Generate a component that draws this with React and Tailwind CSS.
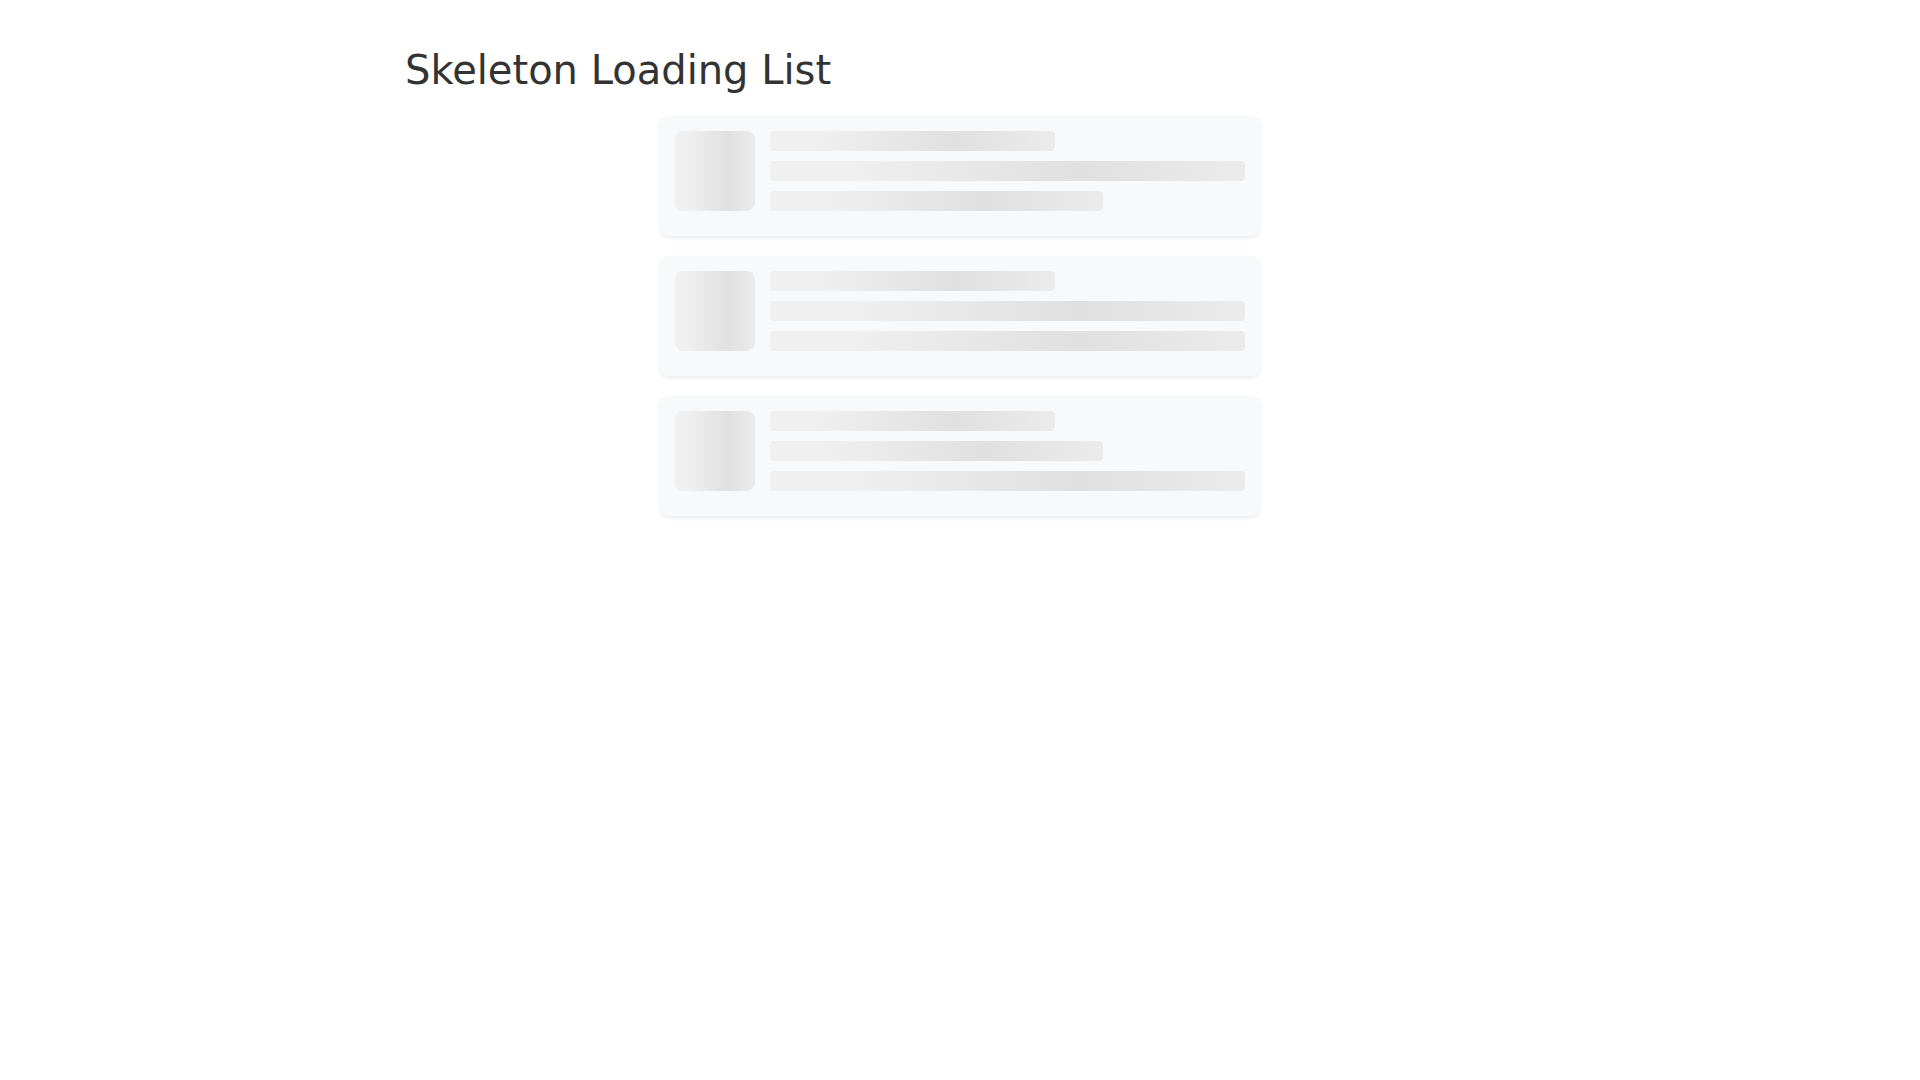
import React from "react";

// Widths of the three text bars in each placeholder row
const rows = [
    ["w-[60%]", "w-full", "w-[70%]"],
    ["w-[60%]", "w-full", "w-full"],
    ["w-[60%]", "w-[70%]", "w-full"],
];

/* Shared shimmer fill, frozen part-way through the sweep */
const shimmer =
    "bg-[linear-gradient(90deg,#f0f0f0_25%,#e0e0e0_50%,#f0f0f0_75%)] bg-size-[200%_100%] bg-position-[35%_0]";

function SkeletonCard({ lines }) {
    return (
        <div className="flex gap-[15px] p-[15px] bg-[#f8f9fa] rounded-lg shadow-[0_2px_4px_rgba(0,0,0,0.08)]">
            <div className={`w-20 h-20 shrink-0 rounded-lg ${shimmer}`} />
            <div className="flex-1">
                {lines.map((w, i) => (
                    <div key={i} className={`h-5 mb-[10px] rounded ${w} ${shimmer}`} />
                ))}
            </div>
        </div>
    );
}

export default function App() {
    return (
        <div className="min-h-screen bg-white font-['DejaVu_Sans',sans-serif]">
            <div className="w-[1110px] mx-auto pt-[46px]">
                <h1 className="text-[40px] leading-[48px] font-normal text-[#333] mb-[22px]">
                    Skeleton Loading List
                </h1>
            </div>

            <div className="w-[600px] mx-auto flex flex-col gap-5">
                {rows.map((lines, i) => (
                    <SkeletonCard key={i} lines={lines} />
                ))}
            </div>
        </div>
    );
}
